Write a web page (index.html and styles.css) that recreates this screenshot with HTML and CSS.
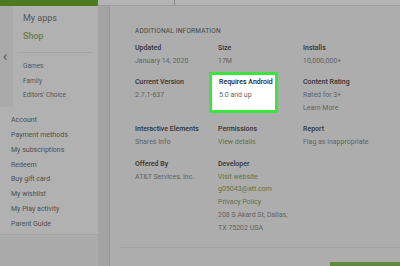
FILE: index.html
```html
<!DOCTYPE html>
<html lang="en">
<head>
    <meta charset="UTF-8">
    <title>Additional information</title>
    <link rel="stylesheet" href="styles.css">
</head>
<body>
    <div class="topbar">
        <div class="brand"></div>
        <div class="search-strip"><span class="tick"></span></div>
    </div>

    <div class="page">
        <!-- Левое меню -->
        <div class="sidebar">
            <span class="collapse">&lsaquo;</span>
            <div class="nav-upper">
                <a class="nav-big">My apps</a>
                <a class="nav-big active">Shop</a>
                <div class="nav-sep"></div>
                <a class="nav-sub">Games</a>
                <a class="nav-sub">Family</a>
                <a class="nav-sub">Editors' Choice</a>
            </div>
            <div class="nav-lower">
                <a>Account</a>
                <a>Payment methods</a>
                <a>My subscriptions</a>
                <a>Redeem</a>
                <a>Buy gift card</a>
                <a>My wishlist</a>
                <a>My Play activity</a>
                <a>Parent Guide</a>
            </div>
        </div>

        <div class="gutter"></div>

        <!-- Дополнительная информация -->
        <div class="main">
            <h3>ADDITIONAL INFORMATION</h3>
            <div class="info-grid">
                <div class="info">
                    <div class="label">Updated</div>
                    <div class="value">January 14, 2020</div>
                </div>
                <div class="info">
                    <div class="label">Size</div>
                    <div class="value">17M</div>
                </div>
                <div class="info">
                    <div class="label">Installs</div>
                    <div class="value">10,000,000+</div>
                </div>

                <div class="info">
                    <div class="label">Current Version</div>
                    <div class="value">2.7.1-637</div>
                </div>
                <div class="info highlight">
                    <div class="label">Requires Android</div>
                    <div class="value">5.0 and up</div>
                </div>
                <div class="info">
                    <div class="label">Content Rating</div>
                    <div class="value">Rated for 3+</div>
                    <div class="value">Learn More</div>
                </div>

                <div class="info">
                    <div class="label">Interactive Elements</div>
                    <div class="value">Shares Info</div>
                </div>
                <div class="info">
                    <div class="label">Permissions</div>
                    <div class="value link">View details</div>
                </div>
                <div class="info">
                    <div class="label">Report</div>
                    <div class="value">Flag as inappropriate</div>
                </div>

                <div class="info">
                    <div class="label">Offered By</div>
                    <div class="value">AT&amp;T Services, Inc.</div>
                </div>
                <div class="info">
                    <div class="label">Developer</div>
                    <div class="value link">Visit website</div>
                    <div class="value link">g05043@att.com</div>
                    <div class="value link">Privacy Policy</div>
                    <div class="value">208 S Akard St, Dallas,</div>
                    <div class="value">TX 75202 USA</div>
                </div>
            </div>
            <div class="bottom-rule"></div>
            <div class="bottom-row"><span class="install-btn"></span></div>
        </div>
    </div>
</body>
</html>
```

FILE: styles.css
```css
body {
    margin: 0;
    width: 400px;
    height: 266px;
    overflow: hidden;
    background-color: #aaaaaa;
    font-family: Roboto, "Liberation Sans", Arial, sans-serif;
    color: #3d3d3d;
}
.topbar {
    display: flex;
    height: 6px;
}
.brand {
    width: 98px;
    background-color: #4b7a22;
}
.search-strip {
    flex: 1;
    background-color: #b4b4b4;
    border-bottom: 1px solid #9e9e9e;
    position: relative;
}
.tick {
    position: absolute;
    left: 76px;
    top: 0;
    width: 1px;
    height: 5px;
    background-color: #8a8a8a;
}
.page {
    display: flex;
    height: 260px;
}
.sidebar {
    width: 98px;
    position: relative;
}
.collapse {
    position: absolute;
    left: 3px;
    top: 42px;
    font-size: 14px;
    color: #555;
}
.nav-upper {
    margin-left: 13px;
    height: 101px;
    background-color: #b1b1b1;
    padding: 3px 0 0 10px;
    box-sizing: border-box;
    display: flex;
    flex-direction: column;
}
.nav-upper a, .nav-lower a {
    display: block;
    white-space: nowrap;
}
.nav-big {
    font-size: 9px;
    line-height: 18px;
    color: #555;
}
.nav-big.active {
    color: #6d7d3f;
    font-weight: 500;
}
.nav-sep {
    height: 1px;
    background-color: #a4a4a4;
    margin: 7px 6px 6px -6px;
}
.nav-sub {
    font-size: 6.5px;
    line-height: 14.5px;
    color: #555;
}
.nav-lower {
    height: 128px;
    background-color: #b1b1b1;
    border-bottom: 1px solid #a4a4a4;
    padding: 6px 0 0 11px;
    box-sizing: border-box;
    font-size: 7px;
    line-height: 14.85px;
    color: #505050;
}
.gutter {
    width: 11px;
    background-color: #a3a3a3;
    border-right: 1px solid #999;
}
.main {
    flex: 1;
    background-color: #adadad;
    padding: 19px 0 0 25px;
}
h3 {
    margin: 0 0 4px;
    font-size: 6.5px;
    line-height: 13px;
    font-weight: 400;
    letter-spacing: 0.2px;
    color: #444;
}
.info-grid {
    display: grid;
    grid-template-columns: 83px 85px 1fr;
    row-gap: 8.5px;
    align-items: start;
}
.label {
    font-size: 7px;
    line-height: 13px;
    font-weight: 500;
    color: #333;
    white-space: nowrap;
}
.value {
    font-size: 7px;
    line-height: 12.75px;
    color: #626262;
    white-space: nowrap;
}
.link {
    color: #5c7449;
}
.highlight {
    justify-self: start;
    width: 69px;
    box-sizing: border-box;
    margin: -4.5px 0 -10px -9px;
    padding: 1.5px 0 8px 7px;
    border: 3px solid #3ee43e;
    background-color: #ffffff;
}
.highlight .label {
    color: #222222;
}
.highlight .value {
    color: #666666;
}
.bottom-rule {
    height: 1px;
    margin: 13px 0 0 -15px;
    background-color: #a2a2a2;
}
.bottom-row {
    display: flex;
    justify-content: flex-end;
    padding-top: 14px;
}
.install-btn {
    width: 70px;
    height: 8px;
    background-color: #5f8a3e;
}
```
